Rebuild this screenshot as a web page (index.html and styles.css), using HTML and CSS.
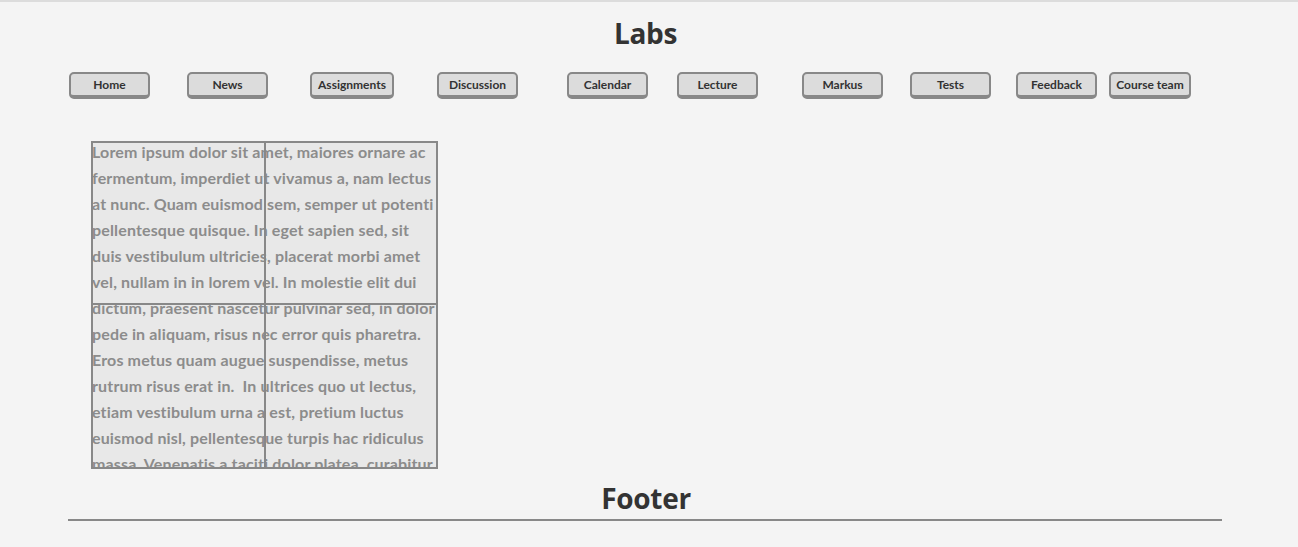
FILE: index.html
```html
<!DOCTYPE html>
<html lang="en">
<head>
<meta charset="utf-8">
<title>Labs</title>
<link rel="stylesheet" href="styles.css">
</head>
<body>
<header class="site-header">
  <h1 class="page-title">Labs</h1>
  <nav class="nav">
    <a class="nav-btn" href="#">Home</a>
    <a class="nav-btn" href="#">News</a>
    <a class="nav-btn" href="#">Assignments</a>
    <a class="nav-btn" href="#">Discussion</a>
    <a class="nav-btn" href="#">Calendar</a>
    <a class="nav-btn" href="#">Lecture</a>
    <a class="nav-btn" href="#">Markus</a>
    <a class="nav-btn" href="#">Tests</a>
    <a class="nav-btn" href="#">Feedback</a>
    <a class="nav-btn" href="#">Course team</a>
  </nav>
</header>
<main class="main">
  <div class="panel">
    <p class="panel-text">Lorem ipsum dolor sit amet, maiores ornare ac<br>fermentum, imperdiet ut vivamus a, nam lectus<br>at nunc. Quam euismod sem, semper ut potenti<br>pellentesque quisque. In eget sapien sed, sit<br>duis vestibulum ultricies, placerat morbi amet<br>vel, nullam in in lorem vel. In molestie elit dui<br>dictum, praesent nascetur pulvinar sed, in dolor<br>pede in aliquam, risus nec error quis pharetra.<br>Eros metus quam augue suspendisse, metus<br>rutrum risus erat in.&nbsp; In ultrices quo ut lectus,<br>etiam vestibulum urna a est, pretium luctus<br>euismod nisl, pellentesque turpis hac ridiculus<br>massa. Venenatis a taciti dolor platea, curabitur</p>
    <div class="panel-grid">
      <div class="cell cell-tl"></div>
      <div class="cell cell-tr"></div>
      <div class="cell cell-bl"></div>
      <div class="cell cell-br"></div>
    </div>
  </div>
</main>
<footer class="site-footer">
  <h2 class="footer-title">Footer</h2>
  <div class="footer-rule"></div>
</footer>
</body>
</html>
```

FILE: styles.css
```css
* { box-sizing: border-box; }

html, body {
  margin: 0;
  padding: 0;
}

body {
  background: #f4f4f4;
  border-top: 2px solid #dcdcdc;
  font-family: "Open Sans", "Liberation Sans", sans-serif;
  color: #333;
  height: 547px;
  overflow: hidden;
}

.site-header {
  display: flex;
  flex-direction: column;
}

.page-title {
  margin: 14px 0 0 0;
  padding-right: 7px;
  text-align: center;
  font-size: 28px;
  line-height: 34px;
  font-weight: 700;
  color: #333;
  letter-spacing: -0.3px;
}

.nav {
  display: flex;
  align-items: flex-start;
  padding-left: 69px;
  margin-top: 22px;
}

.nav-btn {
  display: flex;
  align-items: center;
  justify-content: center;
  width: 81px;
  height: 27px;
  padding-bottom: 1px;
  background: #dcdcdc;
  border: 2px solid #888;
  border-bottom-width: 4px;
  border-radius: 5px;
  color: #333;
  text-decoration: none;
  font-family: "Lato", "Open Sans", sans-serif;
  font-size: 12px;
  font-weight: 700;
  white-space: nowrap;
  flex: none;
}

.nav-btn:nth-child(2) { margin-left: 37px; }
.nav-btn:nth-child(3) { margin-left: 42px; width: 84px; }
.nav-btn:nth-child(4) { margin-left: 43px; }
.nav-btn:nth-child(5) { margin-left: 49px; }
.nav-btn:nth-child(6) { margin-left: 29px; }
.nav-btn:nth-child(7) { margin-left: 44px; }
.nav-btn:nth-child(8) { margin-left: 27px; }
.nav-btn:nth-child(9) { margin-left: 25px; }
.nav-btn:nth-child(10) { margin-left: 12px; width: 82px; }

.main {
  padding: 42px 0 0 91px;
}

.panel {
  position: relative;
  width: 347px;
  height: 328px;
  background: #e8e8e8;
  border: 2px solid #888;
  overflow: hidden;
}

.panel-text {
  margin: 0;
  padding: 0;
  font-family: "Lato", "Open Sans", sans-serif;
  font-size: 16px;
  line-height: 26px;
  font-weight: 700;
  letter-spacing: 0.15px;
  color: #8c8c8c;
  white-space: nowrap;
  margin-left: -1px;
  margin-top: -4px;
}

.panel-grid {
  position: absolute;
  inset: 0;
  display: grid;
  grid-template-columns: 173px 1fr;
  grid-template-rows: 162px 1fr;
  pointer-events: none;
}

.cell-tl { border-right: 2px solid #888; border-bottom: 2px solid #888; }
.cell-tr { border-bottom: 2px solid #888; }
.cell-bl { border-right: 2px solid #888; }

.site-footer {
  display: flex;
  flex-direction: column;
  align-items: center;
}

.footer-title {
  margin: 12px 0 0 0;
  padding-right: 6px;
  font-size: 28px;
  line-height: 34px;
  font-weight: 700;
  color: #333;
  letter-spacing: -0.3px;
}

.footer-rule {
  width: 1154px;
  height: 2px;
  background: #888;
  margin-top: 4px;
  margin-left: -9px;
}
```
